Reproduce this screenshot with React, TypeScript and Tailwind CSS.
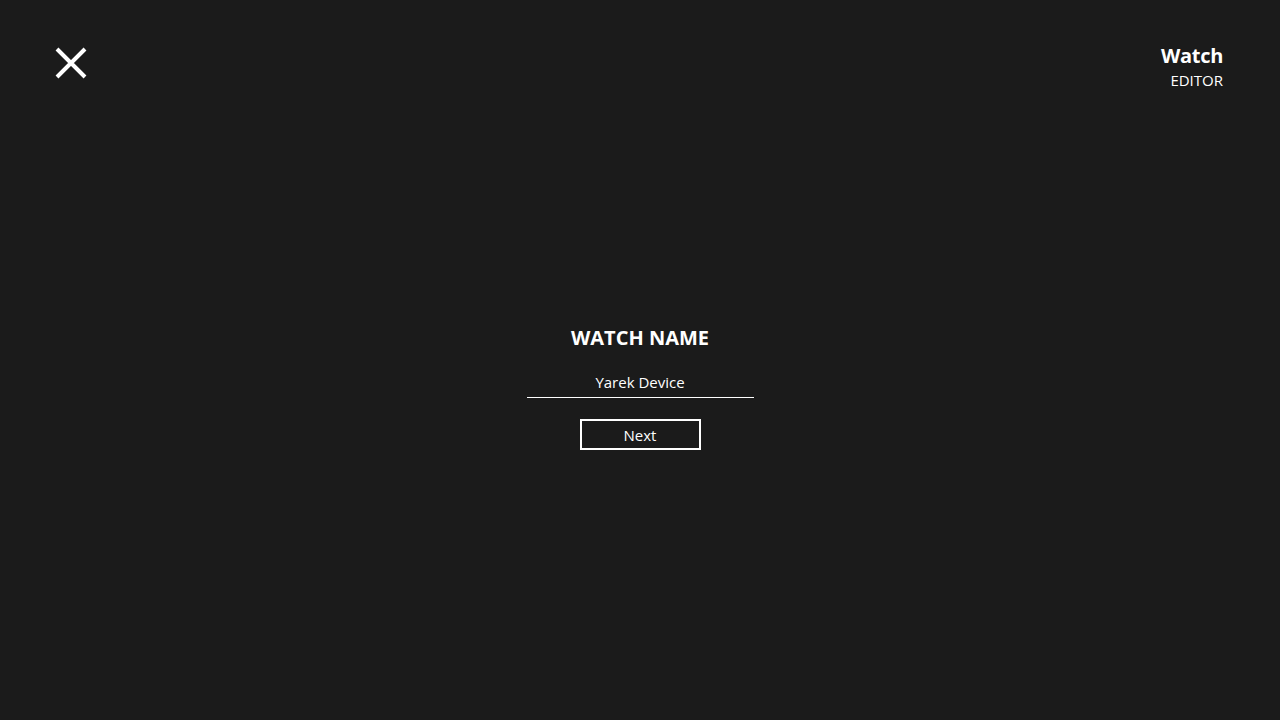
import { useState } from "react";

const App = () => {
  const [name, setName] = useState("Yarek Device");

  return (
    <div
      className="flex h-screen w-full flex-col bg-[#1b1b1b] text-white"
      style={{ fontFamily: '"Open Sans", "Noto Sans", sans-serif' }}
    >
      <header className="flex items-start justify-between pl-[54px] pr-[57px] pt-[46px]">
        <button type="button" className="h-[34px] w-[34px] text-white">
          <svg viewBox="0 0 34 34" className="h-full w-full">
            <path
              d="M3 3 L31 31 M31 3 L3 31"
              stroke="currentColor"
              strokeWidth="4"
              strokeLinecap="butt"
              fill="none"
            />
          </svg>
        </button>
        <div className="flex flex-col items-end">
          <span className="text-[20px] font-bold leading-[20px] tracking-[-0.3px]">
            Watch
          </span>
          <span className="mt-[4px] text-[15px] leading-[20px]">EDITOR</span>
        </div>
      </header>

      <main className="flex flex-col items-center pt-[236px]">
        <h1 className="text-[20px] font-bold leading-[24px]">WATCH NAME</h1>
        <input
          value={name}
          onChange={(e) => setName(e.target.value)}
          className="mt-[22px] w-[227px] border-b-[1.5px] border-white bg-transparent pb-[5px] text-center text-[15px] leading-[20px] text-white outline-none"
        />
        <button
          type="button"
          className="mt-[21px] h-[31px] w-[121px] border-2 border-white text-[15px] leading-[20px] text-white"
        >
          Next
        </button>
      </main>
    </div>
  );
};

export default App;
